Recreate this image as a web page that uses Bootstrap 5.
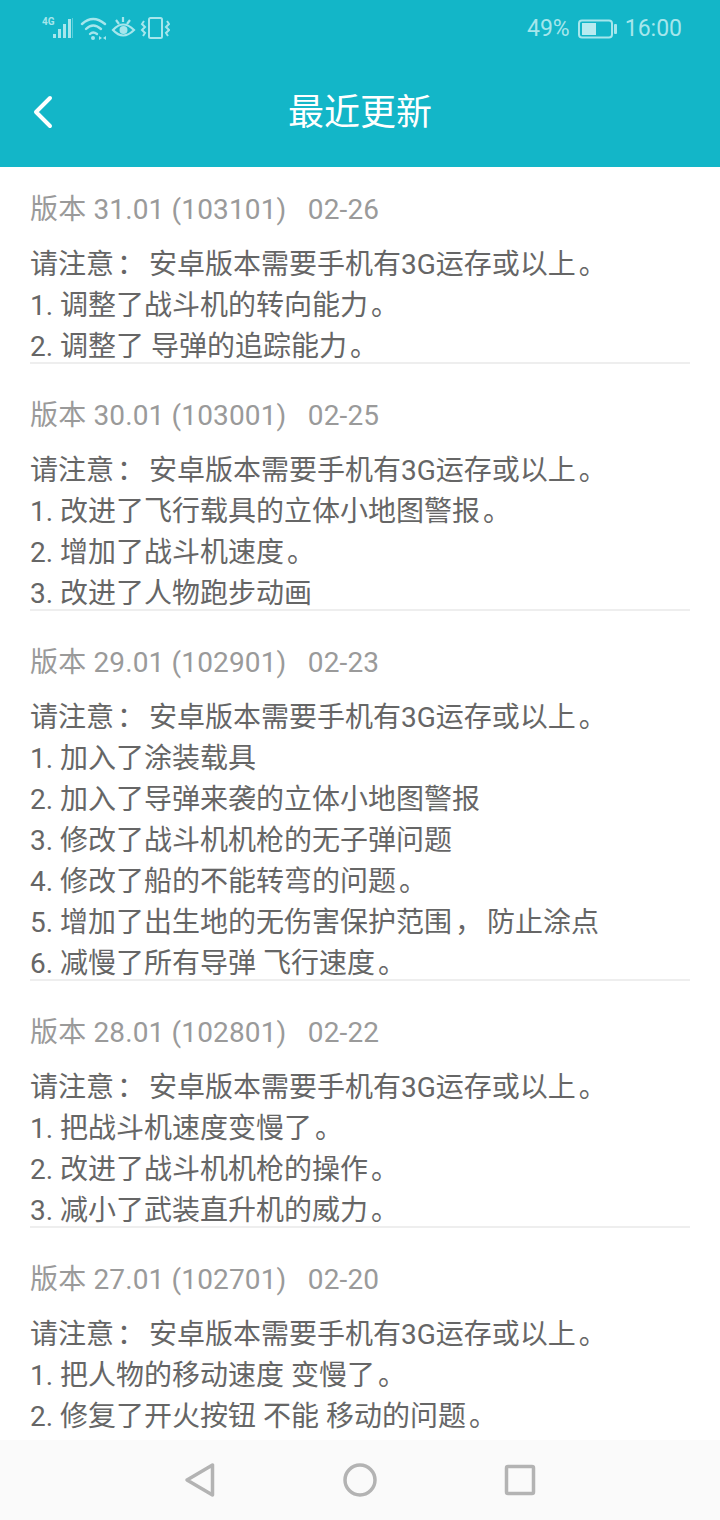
<!doctype html>
<html lang="zh">
<head>
<meta charset="utf-8">
<title>最近更新</title>
<link rel="stylesheet" href="https://cdn.jsdelivr.net/npm/bootstrap@5.3.0/dist/css/bootstrap.min.css">
<style>
html,body{margin:0;height:1520px;overflow:hidden;background:#fff}
body{font-family:Roboto,"Noto Sans CJK SC",sans-serif}
.app-shell{width:720px;height:1520px}
.top-head{background:#13b6c8;height:167px;flex:none}
.status-row{height:58px;padding:0 38px 0 42px;color:#a6e6ec;font-size:23px}
.title-row{height:109px}
.title-text{font-size:36px;color:#fff;line-height:1}
.back-btn{left:32px;top:95px;width:22px;height:34px}
.feed{flex:1 1 auto;overflow:hidden;padding:0 30px}
.release{border-bottom:2px solid #eeeeee;padding-top:31px}
.release:first-child{padding-top:22px}
.release:last-child{border-bottom:0}
.release-head{font-size:28px;line-height:41px;color:#9a9a9a;white-space:pre;margin-bottom:14px;letter-spacing:.15px}
.release-line{font-size:28px;line-height:41px;color:#666;white-space:pre}
.release-line:last-child{margin-bottom:-5px}
.pn{padding-left:3px;margin-right:-3px}
.sys-nav{height:80px;flex:none;background:#fafafa}
</style>
</head>
<body>
<div class="app-shell d-flex flex-column">
  <header class="top-head position-relative">
    <div class="status-row d-flex align-items-center justify-content-between">
      <svg width="128" height="26" viewBox="0 1 128 26" fill="none">
        <text x="0" y="10" font-family="Roboto,sans-serif" font-size="10" font-weight="700" fill="#a6e6ec">4G</text>
        <g fill="#a6e6ec"><rect x="11" y="19" width="3" height="4"/><rect x="16" y="14" width="3" height="9"/><rect x="21" y="9" width="3" height="14"/><rect x="26" y="4" width="3" height="19"/><rect x="30" y="3" width="1" height="20" opacity=".5"/></g>
        <g stroke="#a6e6ec" stroke-width="2.400" stroke-linecap="round"><path d="M40 9Q51 -1 63 9"/><path d="M44 14Q51 7 59 14"/><path d="M48 19Q51 16 55 19"/></g>
        <circle cx="51" cy="23" r="2" fill="#a6e6ec"/><path d="M57 21v4l3-2zM64 21v4l-3-2z" fill="#a6e6ec"/>
        <g stroke="#a6e6ec" stroke-width="2.200"><path d="M71 15Q81 4 92 15Q81 26 71 15Z"/><path d="M74 5l3 4M81 2v5M88 5l-3 4"/></g>
        <circle cx="81.500" cy="15" r="4" fill="#a6e6ec"/>
        <g stroke="#a6e6ec" stroke-width="2"><rect x="107" y="3" width="13" height="20" rx="1.500"/><path d="M102 6l-2 3 3 3-3 3 3 3-2 3M125 6l2 3-3 3 3 3-3 3 2 3"/></g>
      </svg>
      <div class="d-flex align-items-center">
        <span>49%</span>
        <svg class="ms-2 me-2" width="39" height="20" viewBox="0 0 39 20" fill="none"><rect x="1" y="1.500" width="33" height="17" rx="3" stroke="#a6e6ec" stroke-width="2"/><rect x="4" y="4" width="14" height="12" fill="#b8ebf0"/><rect x="36" y="5" width="3" height="10" rx="1" fill="#a6e6ec"/></svg>
        <span>16:00</span>
      </div>
    </div>
    <div class="title-row d-flex align-items-center justify-content-center">
      <svg class="back-btn position-absolute" viewBox="0 0 22 34" fill="none"><path d="M18 3L4 17L18 31" stroke="#fff" stroke-width="4" stroke-linecap="round" stroke-linejoin="round"/></svg>
      <span class="title-text">最近更新</span>
    </div>
  </header>
  <main class="feed">
    <section class="release">
      <div class="release-head">版本 31.01 (103101)   02-26</div>
      <div class="release-line">请注意<span class="pn">：</span> 安卓版本需要手机有3G运存或以上<span class="pn">。</span></div>
      <div class="release-line">1. 调整了战斗机的转向能力<span class="pn">。</span></div>
      <div class="release-line">2. 调整了 导弹的追踪能力<span class="pn">。</span></div>
    </section>
    <section class="release">
      <div class="release-head">版本 30.01 (103001)   02-25</div>
      <div class="release-line">请注意<span class="pn">：</span> 安卓版本需要手机有3G运存或以上<span class="pn">。</span></div>
      <div class="release-line">1. 改进了飞行载具的立体小地图警报<span class="pn">。</span></div>
      <div class="release-line">2. 增加了战斗机速度<span class="pn">。</span></div>
      <div class="release-line">3. 改进了人物跑步动画</div>
    </section>
    <section class="release">
      <div class="release-head">版本 29.01 (102901)   02-23</div>
      <div class="release-line">请注意<span class="pn">：</span> 安卓版本需要手机有3G运存或以上<span class="pn">。</span></div>
      <div class="release-line">1. 加入了涂装载具</div>
      <div class="release-line">2. 加入了导弹来袭的立体小地图警报</div>
      <div class="release-line">3. 修改了战斗机机枪的无子弹问题</div>
      <div class="release-line">4. 修改了船的不能转弯的问题<span class="pn">。</span></div>
      <div class="release-line">5. 增加了出生地的无伤害保护范围<span class="pn">，</span> 防止涂点</div>
      <div class="release-line">6. 减慢了所有导弹 飞行速度<span class="pn">。</span></div>
    </section>
    <section class="release">
      <div class="release-head">版本 28.01 (102801)   02-22</div>
      <div class="release-line">请注意<span class="pn">：</span> 安卓版本需要手机有3G运存或以上<span class="pn">。</span></div>
      <div class="release-line">1. 把战斗机速度变慢了<span class="pn">。</span></div>
      <div class="release-line">2. 改进了战斗机机枪的操作<span class="pn">。</span></div>
      <div class="release-line">3. 减小了武装直升机的威力<span class="pn">。</span></div>
    </section>
    <section class="release">
      <div class="release-head">版本 27.01 (102701)   02-20</div>
      <div class="release-line">请注意<span class="pn">：</span> 安卓版本需要手机有3G运存或以上<span class="pn">。</span></div>
      <div class="release-line">1. 把人物的移动速度 变慢了<span class="pn">。</span></div>
      <div class="release-line">2. 修复了开火按钮 不能 移动的问题<span class="pn">。</span></div>
    </section>
  </main>
  <nav class="sys-nav d-flex align-items-center">
    <svg width="720" height="80" viewBox="0 0 720 80" fill="none" stroke="#b3b3b3" stroke-width="3.500" stroke-linejoin="round"><path d="M212.500 25V55L187 40Z"/><circle cx="360" cy="40" r="15"/><rect x="506.500" y="26.500" width="27" height="27" rx="1.500"/></svg>
  </nav>
</div>
</body>
</html>
